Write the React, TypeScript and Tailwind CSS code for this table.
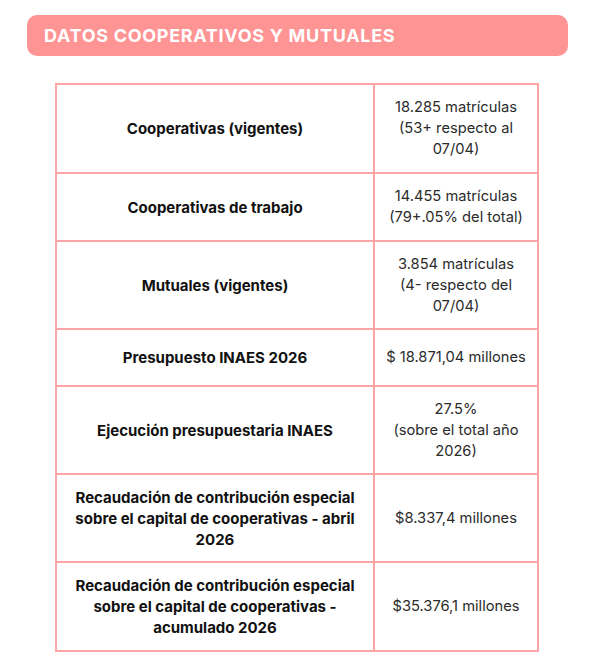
const rows = [
  { label: ['Cooperativas (vigentes)'], value: ['18.285 matrículas', '(53+ respecto al', '07/04)'], h: 'h-[89px]' },
  { label: ['Cooperativas de trabajo'], value: ['14.455 matrículas', '(79+.05% del total)'], h: 'h-[68px]' },
  { label: ['Mutuales (vigentes)'], value: ['3.854 matrículas', '(4- respecto del', '07/04)'], h: 'h-[88px]' },
  { label: ['Presupuesto INAES 2026'], value: ['$ 18.871,04 millones'], h: 'h-[57px]' },
  { label: ['Ejecución presupuestaria INAES'], value: ['27.5%', '(sobre el total año', '2026)'], h: 'h-[88px]' },
  {
    label: ['Recaudación de contribución especial', 'sobre el capital de cooperativas - abril', '2026'],
    value: ['$8.337,4 millones'],
    h: 'h-[88px]',
  },
  {
    label: ['Recaudación de contribución especial', 'sobre el capital de cooperativas -', 'acumulado 2026'],
    value: ['$35.376,1 millones'],
    h: 'h-[89px]',
  },
]

export default function App() {
  return (
    <div
      className="w-[591px] h-[655px] bg-white pt-[15px] pl-[27px]"
      style={{ fontFamily: 'Inter, "Noto Sans", sans-serif' }}
    >
      <div className="w-[541px] h-[41px] rounded-[10px] bg-[#ff9494] flex items-center pl-[17px]">
        <h1 className="text-white font-bold text-[18px] tracking-[0.7px]">
          DATOS COOPERATIVOS Y MUTUALES
        </h1>
      </div>

      <div className="mt-[27px] ml-[28px] w-[484px] border-t-2 border-x-2 border-[#ffa5a5]">
        {rows.map((row, i) => (
          <div
            key={i}
            className={`flex border-b-2 border-[#ffa5a5] ${row.h}`}
          >
            <div className="w-[318px] border-r-2 border-[#ffa5a5] flex items-center justify-center text-center text-[15px] leading-[21px] font-bold text-[#111]">
              <p>
                {row.label.map((l, j) => (
                  <span key={j} className="block">
                    {l}
                  </span>
                ))}
              </p>
            </div>
            <div className="flex-1 flex items-center justify-center text-center text-[14.7px] leading-[21px] text-[#2b2b2b]">
              <p>
                {row.value.map((v, j) => (
                  <span key={j} className="block">
                    {v}
                  </span>
                ))}
              </p>
            </div>
          </div>
        ))}
      </div>
    </div>
  )
}
